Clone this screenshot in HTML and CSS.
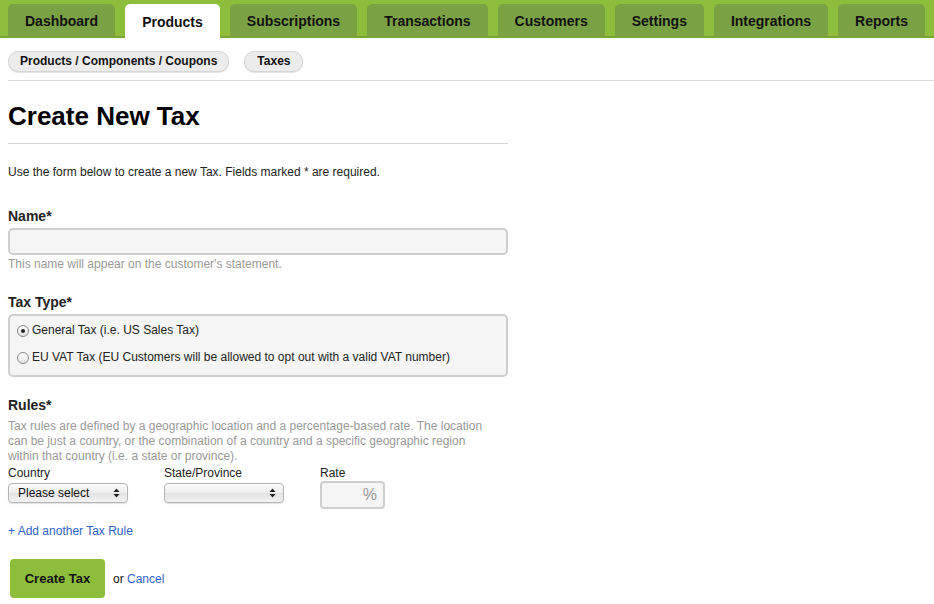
FILE: index.html
```html
<!DOCTYPE html>
<html>
<head>
<meta charset="utf-8">
<link rel="stylesheet" href="styles.css">
</head>
<body>
<nav class="topnav">
  <a class="tab">Dashboard</a>
  <a class="tab active">Products</a>
  <a class="tab">Subscriptions</a>
  <a class="tab">Transactions</a>
  <a class="tab">Customers</a>
  <a class="tab">Settings</a>
  <a class="tab">Integrations</a>
  <a class="tab">Reports</a>
</nav>
<div class="subnav">
  <a class="pill">Products / Components / Coupons</a>
  <a class="pill">Taxes</a>
</div>
<main class="content">
  <h1 class="title">Create New Tax</h1>
  <p class="intro">Use the form below to create a new Tax. Fields marked * are required.</p>

  <div class="field field-name">
    <label class="label">Name*</label>
    <div class="textbox"></div>
    <div class="hint">This name will appear on the customer's statement.</div>
  </div>

  <div class="field field-type">
    <label class="label">Tax Type*</label>
    <div class="radiobox">
      <div class="radio-row"><span class="radio checked"></span>General Tax (i.e. US Sales Tax)</div>
      <div class="radio-row"><span class="radio"></span>EU VAT Tax (EU Customers will be allowed to opt out with a valid VAT number)</div>
    </div>
  </div>

  <div class="field rules">
    <label class="label">Rules*</label>
    <div class="hint desc">Tax rules are defined by a geographic location and a percentage-based rate. The location can be just a country, or the combination of a country and a specific geographic region within that country (i.e. a state or province).</div>
    <div class="rule-row">
      <div class="col col-country">
        <div class="small-label">Country</div>
        <div class="select"><span class="select-text">Please select</span><svg class="arrows" width="7" height="10" viewBox="0 0 7 10"><path d="M3.5 0.5 L6.5 4 L0.5 4 Z M3.5 9.5 L6.5 6 L0.5 6 Z" fill="#222"/></svg></div>
      </div>
      <div class="col col-state">
        <div class="small-label">State/Province</div>
        <div class="select disabled"><span class="select-text"></span><svg class="arrows" width="7" height="10" viewBox="0 0 7 10"><path d="M3.5 0.5 L6.5 4 L0.5 4 Z M3.5 9.5 L6.5 6 L0.5 6 Z" fill="#222"/></svg></div>
      </div>
      <div class="col col-rate">
        <div class="small-label">Rate</div>
        <div class="rate">%</div>
      </div>
    </div>
  </div>

  <a class="link add">+ Add another Tax Rule</a>

  <div class="actions">
    <button class="btn">Create Tax</button>
    <span class="or">or <a class="link">Cancel</a></span>
  </div>
</main>
</body>
</html>
```

FILE: styles.css
```css
html, body {
  margin: 0;
  padding: 0;
  background: #fff;
  font-family: "Liberation Sans", Arial, sans-serif;
  color: #222;
}

.topnav {
  display: flex;
  gap: 10px;
  align-items: flex-end;
  height: 36px;
  padding: 0 8px;
  background: #8cbd3b;
  border-bottom: 2px solid #79a536;
}

.tab {
  display: flex;
  align-items: center;
  height: 32px;
  padding: 2px 17px 0;
  box-sizing: border-box;
  background: #7ba145;
  border-radius: 5px 5px 0 0;
  font-size: 14px;
  font-weight: bold;
  color: #111;
  white-space: nowrap;
}

.tab.active {
  background: #fff;
  height: 34px;
  margin-bottom: -2px;
}

.subnav {
  display: flex;
  gap: 15px;
  margin-left: 8px;
  padding: 13px 0 8px;
  border-bottom: 1px solid #dcdcdc;
}

.pill {
  display: block;
  height: 19px;
  line-height: 19px;
  padding: 0 11px;
  background: #ececec;
  border: 1px solid #d6d6d6;
  border-radius: 10px;
  box-shadow: 0 1px 1px rgba(0,0,0,0.12);
  font-size: 12px;
  font-weight: bold;
  color: #111;
}

.pill + .pill {
  padding: 0 12px;
}

.content {
  width: 500px;
  margin-left: 8px;
}

.title {
  margin: 20px 0 0;
  padding-bottom: 12px;
  border-bottom: 1px solid #d6d6d6;
  font-size: 26px;
  line-height: 30px;
  font-weight: bold;
  color: #000;
}

.intro {
  margin: 20px 0 0;
  font-size: 12px;
  line-height: 16px;
  color: #222;
}

.field-name {
  margin-top: 27px;
}

.field-type {
  margin-top: 21px;
}

.label {
  display: block;
  font-size: 14px;
  font-weight: bold;
  line-height: 18px;
  color: #222;
  margin-bottom: 3px;
}

.textbox {
  height: 23px;
  border: 2px solid #cfcfcf;
  border-radius: 5px;
  background: #f5f5f5;
}

.hint {
  margin-top: 2px;
  font-size: 12px;
  line-height: 15px;
  color: #999;
}

.radiobox {
  border: 2px solid #cfcfcf;
  border-radius: 5px;
  background: #f5f5f5;
  padding: 7px 0 10px 7px;
}

.radio-row {
  display: flex;
  align-items: center;
  gap: 3px;
  font-size: 12px;
  line-height: 15px;
  color: #222;
}

.radio-row + .radio-row {
  margin-top: 12px;
}

.radio {
  width: 10px;
  height: 10px;
  border: 1px solid #888;
  border-radius: 50%;
  background: linear-gradient(#fff, #e4e4e4);
  position: relative;
  flex: none;
}

.radio.checked::after {
  content: "";
  position: absolute;
  left: 3px;
  top: 3px;
  width: 4px;
  height: 4px;
  border-radius: 50%;
  background: #222;
}

.rules {
  margin-top: 19px;
}

.rules .label {
  margin-bottom: 5px;
}

.desc {
  margin-top: 0;
  max-width: 490px;
}

.rule-row {
  display: flex;
  margin-top: 2px;
}

.col-country { width: 156px; }
.col-state { width: 156px; }

.small-label {
  font-size: 12px;
  line-height: 15px;
  color: #222;
  margin-bottom: 2px;
}

.select {
  display: flex;
  align-items: center;
  justify-content: space-between;
  height: 18px;
  border: 1px solid #b5b5b5;
  border-radius: 4px;
  background: linear-gradient(#fdfdfd, #ececec 50%, #e2e2e2 51%, #f3f3f3);
  box-shadow: 0 1px 1px rgba(0,0,0,0.12);
  padding: 0 7px 0 9px;
  box-sizing: content-box;
  width: 102px;
}

.select-text {
  font-size: 12px;
  color: #111;
}

.rate {
  height: 24px;
  margin-top: -2px;
  border: 2px solid #cfcfcf;
  border-radius: 4px;
  background: #f5f5f5;
  font-size: 16px;
  line-height: 24px;
  color: #999;
  text-align: right;
  padding-right: 6px;
  box-sizing: content-box;
  width: 55px;
}

.link {
  color: #2f63c4;
  text-decoration: none;
}

.add {
  display: block;
  margin-top: 15px;
  font-size: 12px;
  line-height: 15px;
}

.actions {
  display: flex;
  align-items: center;
  gap: 8px;
  margin-top: 20px;
  margin-left: 2px;
}

.btn {
  width: 95px;
  height: 39px;
  border: none;
  border-radius: 4px;
  background: #8cbd3b;
  font-family: "Liberation Sans", Arial, sans-serif;
  font-size: 13px;
  font-weight: bold;
  color: #111;
}

.or {
  font-size: 12px;
  color: #111;
}
```
